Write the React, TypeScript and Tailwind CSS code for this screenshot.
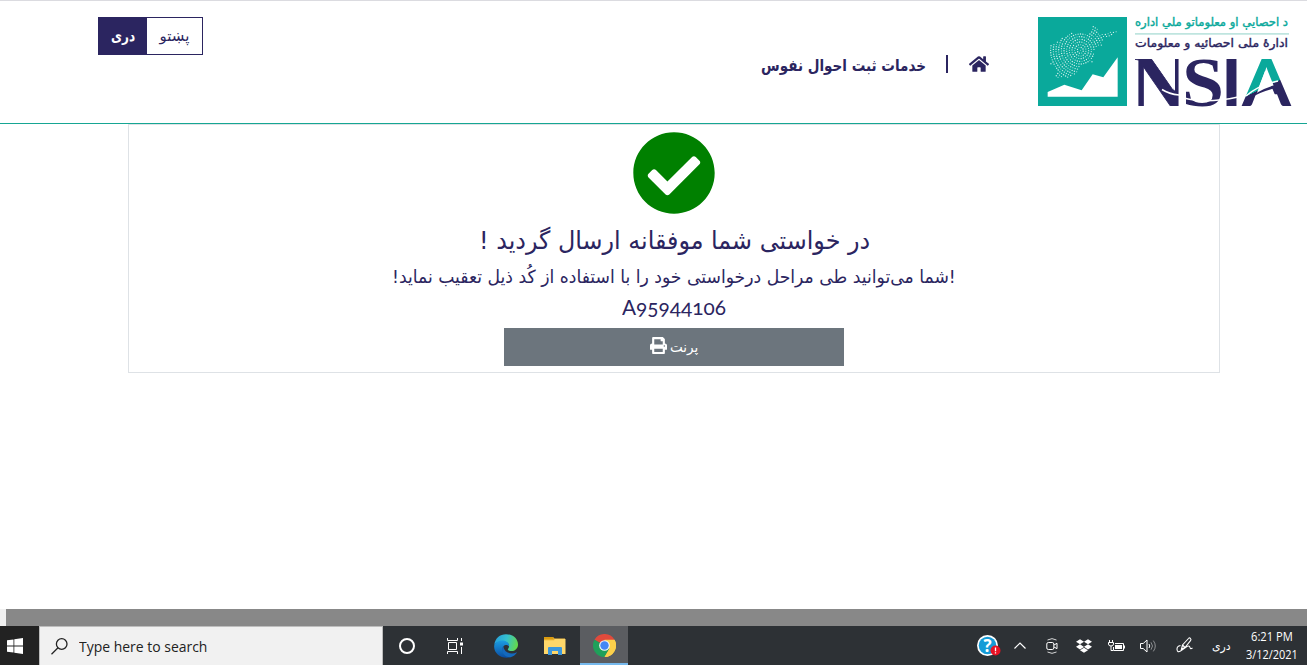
import { useLayoutEffect, useRef, useState } from "react";
import type { ReactNode } from "react";
import { FaCheckCircle, FaDropbox, FaHome, FaPrint } from "react-icons/fa";

/* Scales a single line of text horizontally so it fills the width of its box. */
function FitText({ children, className }: { children: ReactNode; className: string }) {
  const box = useRef<HTMLDivElement>(null);
  const text = useRef<HTMLSpanElement>(null);
  const [scale, setScale] = useState(1);
  useLayoutEffect(() => {
    if (box.current && text.current) setScale(box.current.clientWidth / text.current.offsetWidth);
  }, []);
  return (
    <div ref={box} dir="ltr" className={`flex shrink-0 whitespace-nowrap ${className}`}>
      <span ref={text} dir="auto" className="block shrink-0 origin-left" style={{ transform: `scaleX(${scale})` }}>
        {children}
      </span>
    </div>
  );
}

const mapOutline = [
  [58, 108], [80, 95], [105, 80], [125, 68], [150, 70], [175, 72], [190, 48], [206, 48], [207, 68], [222, 74],
  [245, 63], [263, 63], [245, 80], [218, 85], [215, 107], [192, 120], [190, 160], [176, 160], [158, 163],
  [142, 190], [120, 202], [75, 205], [80, 182], [62, 162], [56, 130],
];

function inside(x: number, y: number) {
  let hit = false;
  for (let i = 0, j = mapOutline.length - 1; i < mapOutline.length; j = i++) {
    const [xi, yi] = mapOutline[i];
    const [xj, yj] = mapOutline[j];
    if (yi > y !== yj > y && x < ((xj - xi) * (y - yi)) / (yj - yi) + xi) hit = !hit;
  }
  return hit;
}

const dots: number[][] = [];
for (let ring = 0; ring < 17; ring++) {
  const r = ring * 8 + 1;
  const n = Math.max(1, Math.round((2 * Math.PI * r) / 7.2));
  for (let k = 0; k < n; k++) {
    const a = (k / n) * Math.PI * 2 + ring * 0.3;
    const x = 151 + r * Math.cos(a);
    const y = 121 + r * Math.sin(a);
    if (inside(x, y)) dots.push([x, y, 1.4 + 0.8 * Math.abs(Math.sin(k * 2.3 + ring))]);
  }
}

function Emblem() {
  return (
    <svg viewBox="24 21 267 267" className="h-[89px] w-[89px] shrink-0">
      <path d="M24 21h267v267H24z" fill="#0aa99b" />
      {dots.map(([x, y, r], i) => (
        <circle key={i} cx={x} cy={y} r={r} fill="#fff" opacity=".8" />
      ))}
      <path d="M53 246l50-22 52 17 33-48 32 9 43-60v118H53z" fill="#fff" />
    </svg>
  );
}

function Wordmark() {
  return (
    <svg viewBox="1134 14 158 94" className="h-[94px] w-[158px] shrink-0">
      <defs>
        <clipPath id="n"><path d="M1135 59h17l23 32V59h3.500v47H1135z" /></clipPath>
        <clipPath id="a"><path clipRule="evenodd" d="M1240 54h52v54h-52zM1265 71l-13.500 37h29z" /></clipPath>
        <linearGradient id="split" gradientUnits="userSpaceOnUse" x1="1262" y1="80" x2="1269" y2="94">
          <stop offset=".5" stopColor="#0aa99b" /><stop offset=".5" stopColor="#2b2560" />
        </linearGradient>
      </defs>
      <text x="1288" y="26" textAnchor="end" textLength="153" lengthAdjust="spacingAndGlyphs" direction="ltr" fontFamily="DejaVu Sans" stroke="#0aa99b" strokeWidth=".4" fontSize="11.5" fill="#0aa99b">د احصایې او معلوماتو ملي اداره</text>
      <path d="M1135 33.8h154" stroke="#bfe5df" strokeWidth="1.8" />
      <text x="1288" y="47" textAnchor="end" textLength="153" lengthAdjust="spacingAndGlyphs" direction="ltr" fontFamily="DejaVu Sans" stroke="#2b2560" strokeWidth=".4" fontSize="11.5" fill="#2b2560">ادارهٔ ملی احصائیه و معلومات</text>
      <g fill="#2b2560" fontFamily="Liberation Serif" fontWeight="bold">
        <g clipPath="url(#n)">
          <text x="1131" y="112" fontSize="85" textLength="55" lengthAdjust="spacingAndGlyphs" stroke="#2b2560" strokeWidth=".8">N</text>
        </g>
        <text x="1182" y="106" fontSize="69" textLength="42" lengthAdjust="spacingAndGlyphs">S</text>
        <g fontFamily="Lato">
          <text x="1221.500" y="106" fontSize="65" textLength="20" lengthAdjust="spacingAndGlyphs" fontWeight="900">I</text>
          <g clipPath="url(#a)">
            <text x="1242" y="106" fontSize="65" textLength="49" lengthAdjust="spacingAndGlyphs" fill="url(#split)">A</text>
          </g>
        </g>
      </g>
      <path d="M1249 99q9-9 26-14l1 3q-17 4-27 11z" fill="#2b2560" />
      <path d="M1162 89.500q7 4.500 17 5.500M1184 98q22 6 54-1M1246 96q12-11 32-15" fill="none" stroke="#fff" strokeWidth="1.500" />
    </svg>
  );
}

function Edge() {
  return (
    <svg viewBox="0 0 24 24" className="h-6 w-6">
      <defs>
        <linearGradient id="eg" x1="0" y1=".3" x2="1" y2=".5">
          <stop offset="0" stopColor="#269fdb" /><stop offset=".5" stopColor="#35c1cf" /><stop offset="1" stopColor="#65d94a" />
        </linearGradient>
        <linearGradient id="eb" x1="0" y1="0" x2="0" y2="1">
          <stop offset="0" stopColor="#1b9de2" /><stop offset="1" stopColor="#0b4da2" />
        </linearGradient>
      </defs>
      <path d="M.3 11C1 4 6 .2 12 .2c7.500 0 12 5 12 10.200 0 4-3 6.600-6.500 6.600-2.500 0-4.200-1-3.500-2 3-4-.5-7.500-5-7.500C5 7.500 1.800 8.300.3 11z" fill="url(#eg)" />
      <path d="M.2 11.500C1.400 8 5 6.500 8.500 6.600c4 .1 7.200 2.600 6.500 6-1-1.200-2-1.600-3.500-1.500-3 1-4 4.500-1.500 8 1.500 2.300 4 3.500 6.500 4C8.500 25.500-.7 20 .2 11.500z" fill="url(#eb)" />
      <path d="M9.200 12.200c-3 4.500.5 10.500 6.500 11 3 0 6-2.500 7.300-5-5.500 3-12.500 1-13.800-6z" fill="#1469bd" />
    </svg>
  );
}

function Explorer() {
  return (
    <svg viewBox="0 0 22 18" className="h-[18px] w-[22px]">
      <path d="M0 0h9l1.500 1.500H21V17H0z" fill="#f5bf42" />
      <path d="M0 0h9l1 2.500H0z" fill="#d99b10" />
      <path d="M0 3.500h10L11 2h10.500v15H0z" fill="#ffd76a" />
      <path d="M4 18v-7q0-1 1-1h12q1 0 1 1v7h-4v-4H8v4z" fill="#3c97dc" />
    </svg>
  );
}

function Chrome() {
  return (
    <svg viewBox="0 0 24 24" className="h-[23px] w-[23px]">
      <path d="M12 12 1.600 6A12 12 0 0 1 22.400 6z" fill="#e04a3c" />
      <path d="M12 12 22.400 6A12 12 0 0 1 12 24l5.200-9z" fill="#fcd04b" />
      <path d="M12 12 17.200 15 12 24A12 12 0 0 1 1.600 6z" fill="#1fa05a" />
      <path d="M12 6h10.400A12 12 0 0 1 12 24l5.200-9z" fill="#fcd04b" />
      <circle cx="12" cy="12" r="5.600" fill="#f4f6f8" />
      <circle cx="12" cy="12" r="4.400" fill="#4487f4" />
    </svg>
  );
}

function Header() {
  return (
    <header className="flex h-[124px] justify-between border-t border-b border-t-[#dbdbe0] border-b-[#16a693] pl-[98px] pr-[15px]">
      <div className="mt-4 flex h-[38px] w-[105px] border border-[#2b2560]">
        <button className="flex w-12 items-center justify-center bg-[#2b2560] font-bold text-white">
          <FitText className="w-6 text-[15px] leading-5">دری</FitText>
        </button>
        <button className="flex flex-1 items-center justify-center">
          <FitText className="w-[30px] text-[15px] leading-5">پښتو</FitText>
        </button>
      </div>
      <div className="flex">
        <nav className="mt-[51px] flex h-7 items-center">
          <FitText className="w-[165px] text-[16px] font-bold leading-7">خدمات ثبت احوال نفوس</FitText>
          <span className="ml-5 mb-1 h-[18px] w-0.5 bg-[#2b2560]" />
          <FaHome className="mb-1 ml-[21px] mr-[49px] h-5 w-5" />
        </nav>
        <div className="mt-[13px] flex gap-[7px]">
          <div className="pt-[3px]"><Emblem /></div>
          <Wordmark />
        </div>
      </div>
    </header>
  );
}

function Taskbar() {
  return (
    <footer className="flex h-[39px] items-center bg-[#2d3135] text-white">
      <div className="flex h-full w-[39px] items-center bg-[#222] pl-[7px]">
        <svg viewBox="0 0 16 16" className="h-4 w-4" fill="#fff">
          <path d="M0 2.300 6.500 1.400v6.100H0zM7.300 1.200 16 0v7.500H7.300zM0 8.400h6.500v6.200L0 13.700zM7.300 8.400H16V16l-8.700-1.200z" />
        </svg>
      </div>
      <div className="flex h-full w-[344px] items-center border border-b-0 border-[#bdbdbd] bg-[#f1f1f1] pl-[11px] text-[#222]">
        <svg viewBox="0 0 17 17" className="h-[17px] w-[17px]" fill="none" stroke="#222" strokeWidth="1.300">
          <circle cx="10.700" cy="6" r="5.300" /><path d="M7 9.800.5 16.300" />
        </svg>
        <FitText className="ml-[11px] mt-px w-[128px] font-['Open_Sans'] text-[14.5px] leading-5">Type here to search</FitText>
      </div>
      <div className="flex h-full w-12 items-center justify-center">
        <span className="h-4 w-4 rounded-full border-2 border-white" />
      </div>
      <div className="flex h-full w-12 items-center justify-center">
        <svg viewBox="0 0 17 16" className="h-4 w-[17px]" fill="none" stroke="#fff">
          <path d="M.5 0v2.500h10V0M.5 16v-2.500h10V16M1.500 4.500h8v7h-8zM14.500 0v3M14.500 9v7" /><path d="M13 4.500h3v3h-3z" fill="#fff" stroke="none" />
        </svg>
      </div>
      <div className="flex h-full w-[54px] items-center justify-center"><Edge /></div>
      <div className="flex h-full w-[47px] items-center justify-center pr-[3px]"><Explorer /></div>
      <div className="flex h-full w-12 items-center justify-center border-b-2 border-[#76b9ed] bg-[#5b5d61] pt-0.5"><Chrome /></div>
      <div className="ml-auto flex h-full items-center">
        <svg viewBox="0 0 24 22" className="mr-[13px] h-[22px] w-6">
          <circle cx="10.500" cy="10.500" r="10.500" fill="#fff" /><circle cx="10.500" cy="10.500" r="8.800" fill="#159bd7" />
          <text x="10.500" y="16.500" textAnchor="middle" fontFamily="Open Sans" fontWeight="bold" fontSize="17" fill="#fff">?</text>
          <circle cx="18.500" cy="15.500" r="5" fill="#e81123" />
          <path d="M18.500 12.500v3.700M18.500 17.200v1.300" stroke="#fff" strokeWidth="1.300" />
        </svg>
        <svg viewBox="0 0 12 7" className="mr-5 h-[7px] w-3" fill="none" stroke="#fff" strokeWidth="1.200"><path d="M.5 6.500 6 1l5.500 5.500" /></svg>
        <svg viewBox="0 0 12 16" className="mr-[18px] h-4 w-3" fill="none" stroke="#fff">
          <path d="M1.500 2Q6-.7 10.500 2M1.500 14q4.500 2.700 9 0" opacity=".8" /><rect x=".8" y="4.500" width="7" height="7" rx="1.500" /><path d="m8 7 3-1.700v5.400L8 9" />
        </svg>
        <FaDropbox className="mr-4 h-4 w-4" />
        <svg viewBox="0 0 17 12" className="mr-[15px] h-3 w-[17px]" fill="none" stroke="#fff">
          <path d="M1.500 0v2M4.500 0v2M.5 2.500h5V4Q5.500 6 3 6T.5 4zM3 6v4.500h2" /><path d="M7 3.500h8.500v7H5.500V7" /><path d="M7 5h7v4H7z" fill="#fff" stroke="none" /><path d="M16.500 5.500v3" />
        </svg>
        <svg viewBox="0 0 17 14" className="mr-[19px] h-[14px] w-[17px]" fill="none" stroke="#fff">
          <path d="M.5 4.500h2.700L7 1v12L3.200 9.500H.5z" /><path d="M9 5q1.500 2 0 4" /><path d="M11 3.300q3 3.700 0 7.400M13.300 1.600q4 5.400 0 10.800" opacity=".45" />
        </svg>
        <svg viewBox="0 0 17 17" className="mr-[19px] h-[17px] w-[17px]" fill="none" stroke="#fff" strokeWidth="1.100">
          <path d="m5.500 12 1-4 6-6.500q1-1.200 2 0t0 2.200L9 10.500zM6.500 8 9 10.500M4.500 8.500Q.8 9 1 12.500 1.500 16 4.500 14l5-3.500q4-3 4.500 0 .2 2 2.500.5" />
        </svg>
        <FitText className="mr-[14px] w-[19px] text-[12px] leading-5">دری</FitText>
        <div className="mr-[9px] flex w-[53px] flex-col items-center">
          <FitText className="w-[42px] font-['Open_Sans'] text-[12px] leading-[18px]">6:21 PM</FitText>
          <FitText className="w-[52px] font-['Open_Sans'] text-[12px] leading-[18px]">3/12/2021</FitText>
        </div>
      </div>
    </footer>
  );
}

export default function App() {
  return (
    <div className="flex h-[665px] w-[1307px] flex-col overflow-hidden bg-white font-['DejaVu_Sans',sans-serif] text-[#2b2560]">
      <Header />
      <main className="flex-1">
        <section className="ml-32 flex h-[249px] w-[1092px] flex-col items-center border border-[#dee2e6]">
          <FaCheckCircle className="mt-[5.5px] h-[84px] w-[84px] shrink-0 text-[#008000]" />
          <FitText className="mt-[8.5px] w-[391px] text-[25px] leading-9">در خواستی شما موفقانه ارسال گردید !</FitText>
          <FitText className="w-[564px] text-[18px] leading-9">!شما می‌توانید طی مراحل درخواستی خود را با استفاده از کُد ذیل تعقیب نماید!</FitText>
          <FitText className="-mt-[3px] w-[104px] font-['Lato'] text-[21px] leading-[30px] [font-feature-settings:'onum']">A95944106</FitText>
          <button className="mt-[6px] flex h-[38px] w-[340px] shrink-0 items-center justify-center gap-[3px] bg-[#6c757d] text-white">
            <FaPrint className="mb-[3px] h-[17px] w-[17px]" />
            <FitText className="w-7 text-[14px] leading-6">پرنت</FitText>
          </button>
        </section>
      </main>
      <div className="h-[17px] border-l-[6px] border-[#f0f0f0] bg-[#888]" />
      <Taskbar />
    </div>
  );
}
